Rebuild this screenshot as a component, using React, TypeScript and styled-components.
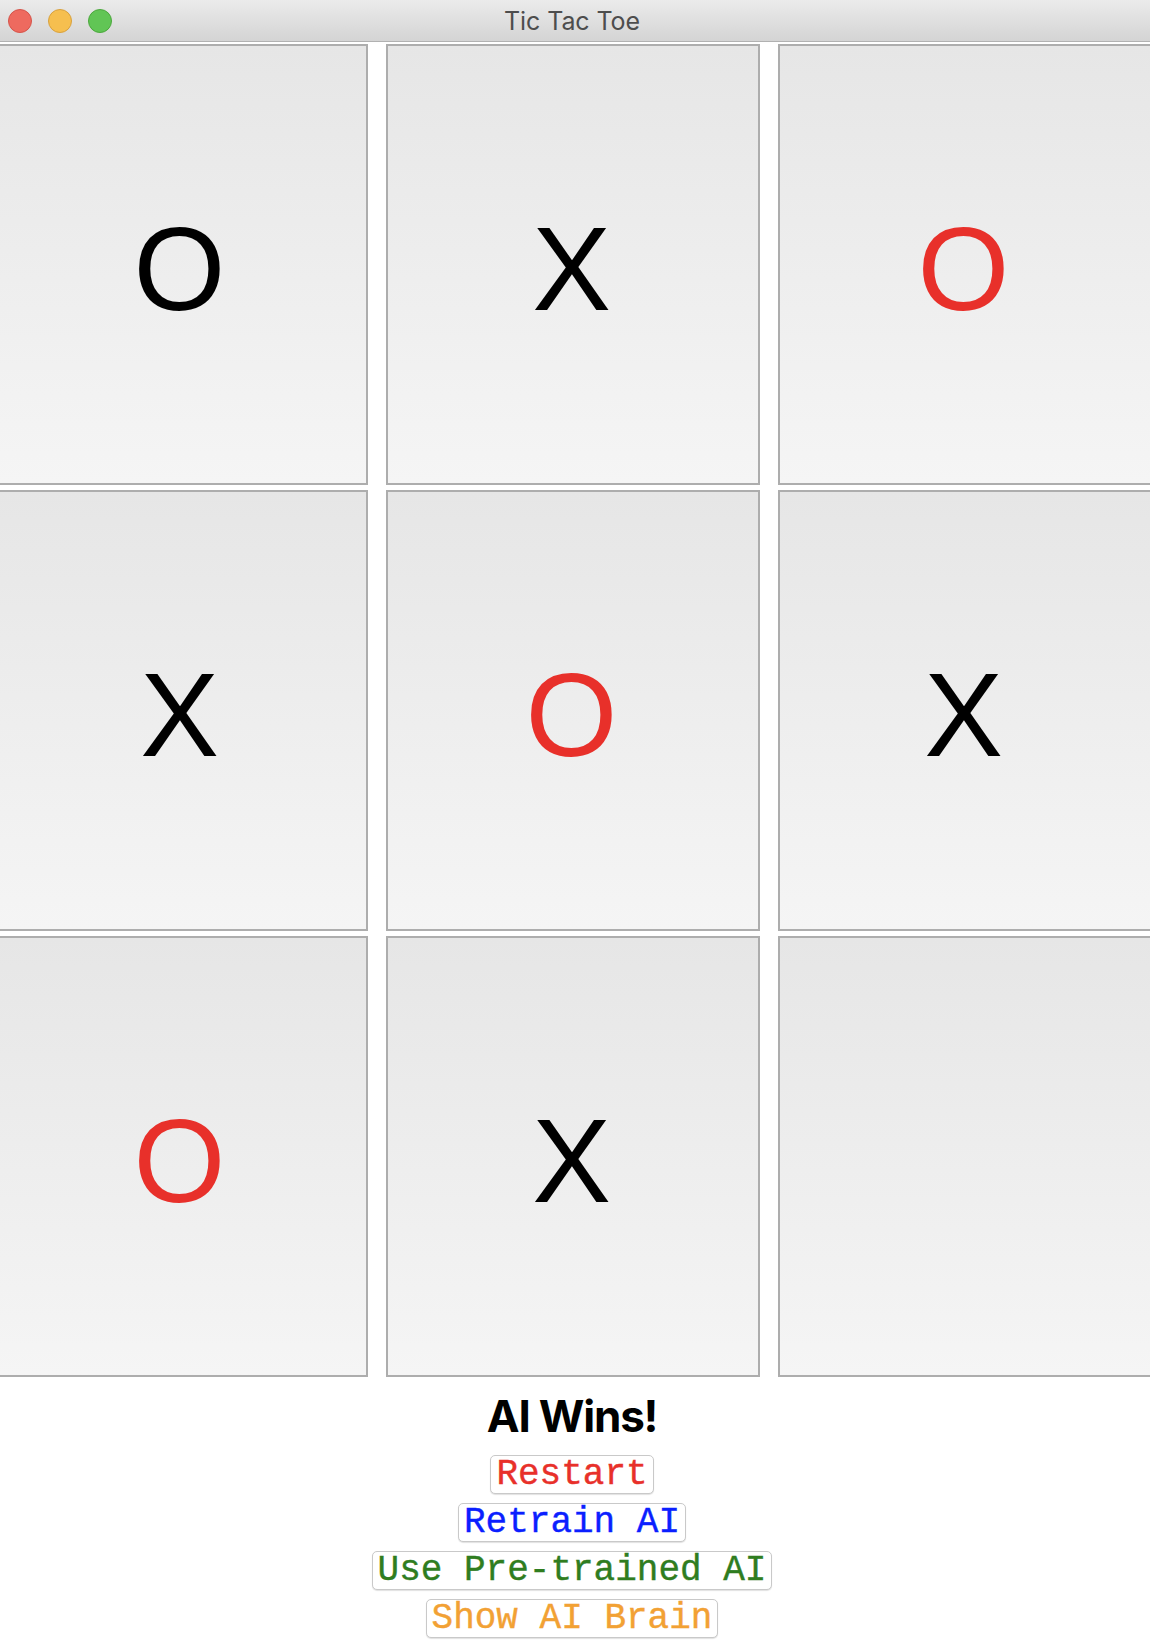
import React from "react";
import styled, { createGlobalStyle } from "styled-components";

const GlobalStyle = createGlobalStyle`
  html, body {
    margin: 0;
    padding: 0;
    background: #ffffff;
    overflow: hidden;
  }
  body {
    font-family: "Liberation Sans", Arial, sans-serif;
  }
`;

const Window = styled.div`
  width: 1150px;
  height: 1642px;
  display: flex;
  flex-direction: column;
  align-items: stretch;
  background: #ffffff;
  overflow: hidden;
`;

const TitleBar = styled.div`
  height: 41px;
  padding-right: 6px;
  display: grid;
  grid-template-columns: 1fr auto 1fr;
  align-items: center;
  background: linear-gradient(to bottom, #ebebeb, #d4d4d4);
  border-bottom: 1px solid #b1b1b1;
  flex: none;
`;

const Lights = styled.div`
  display: flex;
  gap: 16px;
  padding-left: 8px;
`;

const Light = styled.span<{ $fill: string; $edge: string }>`
  width: 24px;
  height: 24px;
  box-sizing: border-box;
  border-radius: 50%;
  background: ${(p) => p.$fill};
  border: 1px solid ${(p) => p.$edge};
`;

const Title = styled.div`
  font-family: Inter, "Liberation Sans", sans-serif;
  font-size: 25px;
  color: #4d4d4d;
  letter-spacing: -0.1px;
`;

const Board = styled.div`
  margin-top: 2px;
  margin-left: -6px;
  width: 1158px;
  display: grid;
  grid-template-columns: repeat(3, 374px);
  grid-template-rows: repeat(3, 441px);
  column-gap: 18px;
  row-gap: 5px;
  flex: none;
`;

const Cell = styled.button<{ $color: string }>`
  box-sizing: border-box;
  margin: 0;
  padding: 9px 3px 0 0;
  border: 2px solid #adadad;
  background: linear-gradient(to bottom, #e6e6e6, #f5f5f5);
  display: flex;
  align-items: center;
  justify-content: center;
  font-family: "Liberation Sans", Arial, sans-serif;
  font-size: 118px;
  line-height: 1;
  color: ${(p) => p.$color};
  cursor: pointer;
`;

const Status = styled.div`
  margin-top: 11px;
  padding-right: 6px;
  text-align: center;
  font-family: Inter, "Liberation Sans", sans-serif;
  font-weight: 700;
  font-size: 44px;
  line-height: 56px;
  letter-spacing: -1.2px;
  color: #000000;
`;

const Controls = styled.div`
  margin-top: 11px;
  padding-right: 6px;
  display: flex;
  flex-direction: column;
  align-items: center;
  gap: 9px;
`;

const ControlButton = styled.button<{ $color: string }>`
  box-sizing: border-box;
  margin: 0;
  padding: 0 5px;
  height: 39px;
  border: 1px solid #c9c9c9;
  border-radius: 5px;
  background: #ffffff;
  box-shadow: 0 1px 1px rgba(0, 0, 0, 0.12);
  font-family: "Liberation Mono", "Courier New", monospace;
  font-size: 36px;
  line-height: 37px;
  color: ${(p) => p.$color};
  -webkit-text-stroke: 0.4px ${(p) => p.$color};
  cursor: pointer;
`;

const RED = "#e8302a";
const BLACK = "#000000";

const cells: { mark: string; color: string }[] = [
  { mark: "O", color: BLACK },
  { mark: "X", color: BLACK },
  { mark: "O", color: RED },
  { mark: "X", color: BLACK },
  { mark: "O", color: RED },
  { mark: "X", color: BLACK },
  { mark: "O", color: RED },
  { mark: "X", color: BLACK },
  { mark: "", color: BLACK },
];

const controls = [
  { label: "Restart", color: "#e8302a" },
  { label: "Retrain AI", color: "#0b1fff" },
  { label: "Use Pre-trained AI", color: "#2f7d1f" },
  { label: "Show AI Brain", color: "#f2a134" },
];

export default function App() {
  return (
    <>
      <GlobalStyle />
      <Window>
        <TitleBar>
          <Lights>
            <Light $fill="#ee6a5f" $edge="#d5544a" />
            <Light $fill="#f6bf4f" $edge="#d8a13e" />
            <Light $fill="#61c555" $edge="#4ca83d" />
          </Lights>
          <Title>Tic Tac Toe</Title>
          <div />
        </TitleBar>
        <Board>
          {cells.map((c, i) => (
            <Cell key={i} $color={c.color}>
              {c.mark}
            </Cell>
          ))}
        </Board>
        <Status>AI Wins!</Status>
        <Controls>
          {controls.map((b) => (
            <ControlButton key={b.label} $color={b.color}>
              {b.label}
            </ControlButton>
          ))}
        </Controls>
      </Window>
    </>
  );
}
